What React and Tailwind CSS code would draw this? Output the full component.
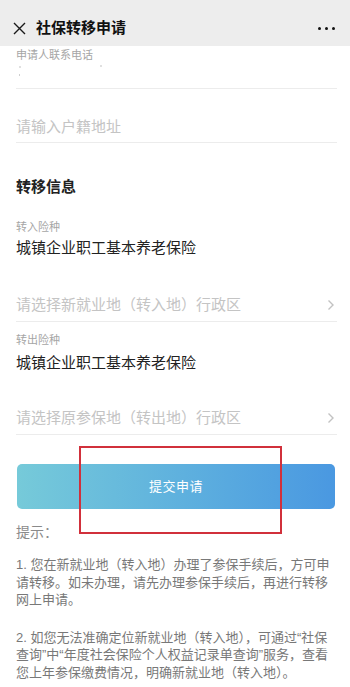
import React from 'react';

const font = "font-['Liberation_Sans','Noto_Sans_CJK_SC',sans-serif]";

const Chevron = () => (
  <svg width="8" height="12" viewBox="0 0 8 12" fill="none">
    <path d="M1.5 1.5 L6 6 L1.5 10.5" stroke="#c2c2c2" strokeWidth="1.4" />
  </svg>
);

const Picker = ({ text }) => (
  <div className="ml-4 mr-[13px] border-b border-[#ececec] pb-[6px] flex items-center justify-between">
    <span className="text-[15px] leading-[20px] text-[#c4c4c4]">{text}</span>
    <span className="mr-[2px] flex items-center"><Chevron /></span>
  </div>
);

export default function App() {
  return (
    <div className={`relative w-[350px] h-[687px] overflow-hidden bg-white ${font}`}>
      {/* top bar */}
      <div className="h-[46px] pt-[10px] bg-[#ededed] flex items-center px-[13px]">
        <svg width="13" height="13" viewBox="0 0 13 13">
          <path d="M1 1 L12 12 M12 1 L1 12" stroke="#1a1a1a" strokeWidth="1.4" />
        </svg>
        <span className="ml-[10px] text-[15px] leading-[20px] font-semibold text-[#111]">社保转移申请</span>
        <div className="ml-auto flex gap-[4px] mr-[2px]">
          <span className="w-[3px] h-[3px] rounded-full bg-[#111]" />
          <span className="w-[3px] h-[3px] rounded-full bg-[#111]" />
          <span className="w-[3px] h-[3px] rounded-full bg-[#111]" />
        </div>
      </div>

      {/* phone */}
      <div className="ml-4 mr-[13px] border-b border-[#ececec] pt-[2px]">
        <div className="text-[11px] leading-[14px] text-[#a5a5a5]">申请人联系电话</div>
        <div className="h-[26px] relative">
          <span className="absolute left-[3px] top-[4px] w-[2px] h-[2px] bg-[#e0e0e0]" />
          <span className="absolute left-[3px] top-[12px] w-[1px] h-[2px] bg-[#cfcfcf]" />
          <span className="absolute left-[84px] top-[3px] w-[2px] h-[2px] bg-[#e0e0e0]" />
        </div>
      </div>

      {/* address */}
      <div className="ml-4 mr-[13px] border-b border-[#ececec] pt-[28px] pb-[5px]">
        <div className="text-[15px] leading-[20px] text-[#c4c4c4]">请输入户籍地址</div>
      </div>

      <div className="px-4 pt-[34px] text-[15px] leading-[20px] font-bold text-[#222]">转移信息</div>

      <div className="px-4 pt-[23px]">
        <div className="text-[11px] leading-[14px] text-[#a5a5a5]">转入险种</div>
        <div className="mt-[4px] text-[15px] leading-[20px] text-[#222]">城镇企业职工基本养老保险</div>
      </div>
      <div className="pt-[37px]">
        <Picker text="请选择新就业地（转入地）行政区" />
      </div>

      <div className="px-4 pt-[11px]">
        <div className="text-[11px] leading-[14px] text-[#a5a5a5]">转出险种</div>
        <div className="mt-[6px] text-[15px] leading-[20px] text-[#222]">城镇企业职工基本养老保险</div>
      </div>
      <div className="pt-[35px]">
        <Picker text="请选择原参保地（转出地）行政区" />
      </div>

      {/* submit */}
      <div className="pl-[17px] pr-[15px] pt-[29px]">
        <button className="w-full h-[45px] rounded-[5px] bg-gradient-to-r from-[#76cad9] to-[#4a98e1] text-white text-[13px] tracking-[0.5px]">
          提交申请
        </button>
      </div>

      <div className="px-4 pt-[13px] text-[14px] leading-[20px] text-[#8a8a8a]">提示：</div>

      <div className="pl-4 pr-2 pt-[14px] text-[13px] leading-[17.5px] text-[#787878]">
        <p>
          1. 您在新就业地（转入地）办理了参保手续后，方可申<br />
          请转移。如未办理，请先办理参保手续后，再进行转移<br />
          网上申请。
        </p>
        <p className="mt-[20px]">
          2. 如您无法准确定位新就业地（转入地），可通过“社保<br />
          查询”中“年度社会保险个人权益记录单查询”服务，查看<br />
          您上年参保缴费情况，明确新就业地（转入地）。
        </p>
      </div>

      {/* annotation box */}
      <div className="absolute left-[79px] top-[446px] w-[203px] h-[88px] border-2 border-[#d1303b]" />
    </div>
  );
}
